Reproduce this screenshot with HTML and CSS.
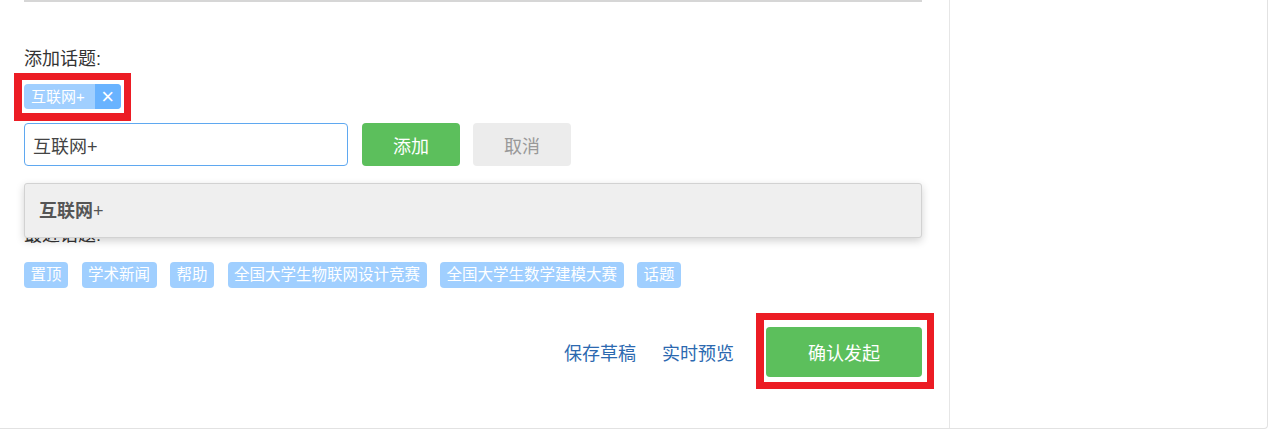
FILE: index.html
```html
<!DOCTYPE html>
<html lang="zh-CN">
<head>
  <meta charset="UTF-8" />
  <title>发起话题</title>
  <link rel="stylesheet" href="styles.css">
</head>
<body>
  <div class="page">
    <div class="main">
      <div class="divider"></div>

      <div class="label first">添加话题:</div>

      <div class="chosen">
        <span class="tag mark-tag">
          <span class="tag-text">互联网+</span>
          <span class="tag-close">&times;</span>
        </span>
      </div>

      <div class="add-row">
        <input type="text" class="topic-input" value="互联网+" />
        <button class="btn btn-add">添加</button>
        <button class="btn btn-cancel">取消</button>

        <!-- 下拉提示 -->
        <div class="suggest">
          <div class="suggest-item"><b>互联网</b>+</div>
        </div>
      </div>

      <div class="label recent">最近话题:</div>

      <div class="hot-tags">
        <span class="hot">置顶</span>
        <span class="hot">学术新闻</span>
        <span class="hot">帮助</span>
        <span class="hot">全国大学生物联网设计竞赛</span>
        <span class="hot">全国大学生数学建模大赛</span>
        <span class="hot">话题</span>
      </div>

      <div class="footer">
        <a href="#" class="link">保存草稿</a>
        <a href="#" class="link">实时预览</a>
        <button class="btn btn-submit mark-btn">确认发起</button>
      </div>
    </div>
    <div class="side"></div>
  </div>
</body>
</html>
```

FILE: styles.css
```css
body {
  margin: 0;
  background: #fff;
  font-family: "Liberation Sans", "Noto Sans CJK SC", sans-serif;
  color: #333;
}
.page {
  display: flex;
  width: 1268px;
  height: 429px;
  box-sizing: border-box;
  border-right: 1px solid #e2e2e2;
  border-bottom: 1px solid #e2e2e2;
  border-bottom-right-radius: 4px;
}
.main {
  width: 950px;
  box-sizing: border-box;
  padding-left: 24px;
  padding-right: 27px;
  border-right: 1px solid #e6e6e6;
}
.side {
  flex: 1;
}
.divider {
  height: 2px;
  background: #d6d6d6;
}
.label {
  font-size: 18px;
  line-height: 24px;
  color: #333;
}
.label.first {
  margin-top: 45px;
}
.label.recent {
  margin-top: 57px;
}
.chosen {
  margin-top: 13px;
  height: 25px;
  display: flex;
}
.tag {
  position: relative;
  display: inline-flex;
  height: 25px;
  border-radius: 4px;
  background: #a0cfff;
  color: #fff;
  font-size: 15px;
  line-height: 25px;
}
.tag-text {
  padding: 0 10px 0 7px;
}
.tag-close {
  width: 26px;
  text-align: center;
  background: #69b3ff;
  border-radius: 0 4px 4px 0;
  font-size: 22px;
}
/* 红色标注框 */
.mark-tag::after,
.mark-btn::after {
  content: "";
  position: absolute;
  border: 7px solid #ec1c24;
  border-left-width: 8px;
  pointer-events: none;
}
.mark-tag::after {
  top: -11px;
  left: -10px;
  right: -10px;
  bottom: -12px;
  border-bottom-width: 8px;
}
.mark-btn::after {
  top: -14px;
  left: -10px;
  right: -12px;
  bottom: -12px;
}
.add-row {
  position: relative;
  margin-top: 14px;
  display: flex;
  height: 43px;
}
.topic-input {
  width: 324px;
  height: 43px;
  box-sizing: border-box;
  border: 1px solid #5fa8f0;
  border-radius: 4px;
  padding: 0 8px;
  font-family: inherit;
  font-size: 18px;
  color: #444;
  outline: none;
}
.btn {
  border: none;
  border-radius: 4px;
  font-family: inherit;
  font-size: 18px;
  cursor: pointer;
}
.btn-add {
  margin-left: 14px;
  width: 98px;
  background: #5cbf5c;
  color: #fff;
}
.btn-cancel {
  margin-left: 13px;
  width: 98px;
  background: #ececec;
  color: #999;
}
.suggest {
  position: absolute;
  top: 60px;
  left: 0;
  right: 0;
  height: 55px;
  box-sizing: border-box;
  background: #efefef;
  border: 1px solid #d2d2d2;
  border-radius: 3px;
  box-shadow: 0 3px 8px rgba(0, 0, 0, 0.18);
}
.suggest-item {
  padding-left: 14px;
  line-height: 55px;
  font-size: 18px;
  color: #555;
}
.suggest-item b {
  color: #555;
}
.hot-tags {
  margin-top: 15px;
  display: flex;
  gap: 13.5px;
}
.hot {
  height: 26px;
  line-height: 26px;
  padding: 0 6.5px;
  border-radius: 4px;
  background: #a0cfff;
  color: #fff;
  font-size: 15.5px;
}
.footer {
  margin-top: 39px;
  display: flex;
  justify-content: flex-end;
  align-items: center;
}
.link {
  font-size: 18px;
  color: #2c69b0;
  text-decoration: none;
  margin-right: 26px;
}
.link + .link {
  margin-right: 32px;
}
.btn-submit {
  position: relative;
  width: 156px;
  height: 50px;
  background: #5cbf5c;
  color: #fff;
}
```
